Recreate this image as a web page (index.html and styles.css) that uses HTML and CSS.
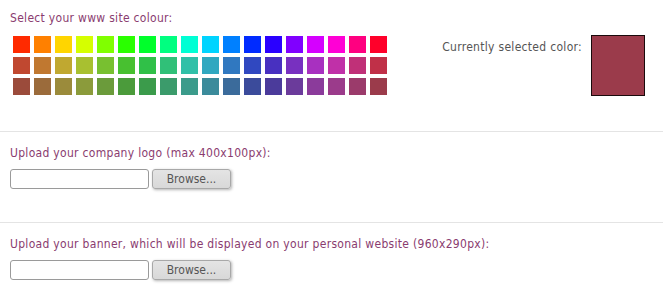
FILE: index.html
```html
<!DOCTYPE html>
<html lang="en">
<head>
    <meta charset="UTF-8">
    <title>Site settings</title>
    <link rel="stylesheet" href="styles.css">
</head>
<body>
    <div class="section colours">
        <div class="picker">
            <div class="label">Select your www site colour:</div>
            <div class="swatches" id="swatches"></div>
        </div>
        <div class="current">
            <span class="current-label">Currently selected color:</span>
            <div class="current-box" id="currentBox"></div>
        </div>
    </div>

    <div class="section">
        <div class="label">Upload your company logo (max 400x100px):</div>
        <div class="upload">
            <input type="text" class="file-field">
            <button type="button" class="browse">Browse...</button>
        </div>
    </div>

    <div class="section">
        <div class="label">Upload your banner, which will be displayed on your personal website (960x290px):</div>
        <div class="upload">
            <input type="text" class="file-field">
            <button type="button" class="browse">Browse...</button>
        </div>
    </div>

    <script>
        // three rows of 18 hues, each row less saturated
        var rows = [[100, 50], [60, 47], [45, 42]];
        var grid = document.getElementById('swatches');
        var box = document.getElementById('currentBox');
        rows.forEach(function (r) {
            for (var i = 0; i < 18; i++) {
                var sw = document.createElement('div');
                sw.className = 'swatch';
                sw.style.background = 'hsl(' + (10 + i * 20) + ',' + r[0] + '%,' + r[1] + '%)';
                sw.addEventListener('click', function () {
                    box.style.background = this.style.background;
                });
                grid.appendChild(sw);
            }
        });
    </script>
</body>
</html>
```

FILE: styles.css
```css
body {
    margin: 0;
    font-family: "DejaVu Sans Condensed", "DejaVu Sans", sans-serif;
    font-size: 12px;
    letter-spacing: 0.3px;
    background: #fff;
}
.section {
    padding: 13px 10px 33px;
    border-bottom: 1px solid #e4e4e4;
}
.section:last-child {
    border-bottom: none;
    padding-bottom: 4px;
}
.label {
    color: #8a3c6f;
    line-height: 16px;
}
.colours {
    display: flex;
    justify-content: space-between;
    padding: 10px 18px 35px 10px;
}
.swatches {
    display: grid;
    grid-template-columns: repeat(18, 17px);
    grid-auto-rows: 17px;
    gap: 4px;
    margin: 10px 0 0 3px;
}
.swatch {
    cursor: pointer;
}
.current {
    display: flex;
    align-items: flex-start;
    gap: 9px;
    padding-top: 25px;
}
.current-label {
    color: #555;
    line-height: 16px;
    margin-top: 4px;
}
.current-box {
    width: 52px;
    height: 59px;
    border: 1px solid #1a0a0c;
    background: hsl(350, 45%, 42%);
}
.upload {
    display: flex;
    gap: 3px;
    margin-top: 8px;
}
.file-field {
    box-sizing: border-box;
    width: 139px;
    height: 20px;
    margin: 0;
    border: 1px solid #9a9a9a;
    border-radius: 3px;
    padding: 0 3px;
}
.browse {
    box-sizing: border-box;
    width: 79px;
    height: 20px;
    margin: 0;
    padding: 0;
    font-family: "DejaVu Sans Condensed", "DejaVu Sans", sans-serif;
    font-size: 12px;
    color: #555;
    background: linear-gradient(#e4e4e4, #d8d8d8);
    border: 1px solid #a8a8a8;
    border-radius: 3px;
    box-shadow: 1px 1px 3px rgba(0, 0, 0, 0.3);
}
```
